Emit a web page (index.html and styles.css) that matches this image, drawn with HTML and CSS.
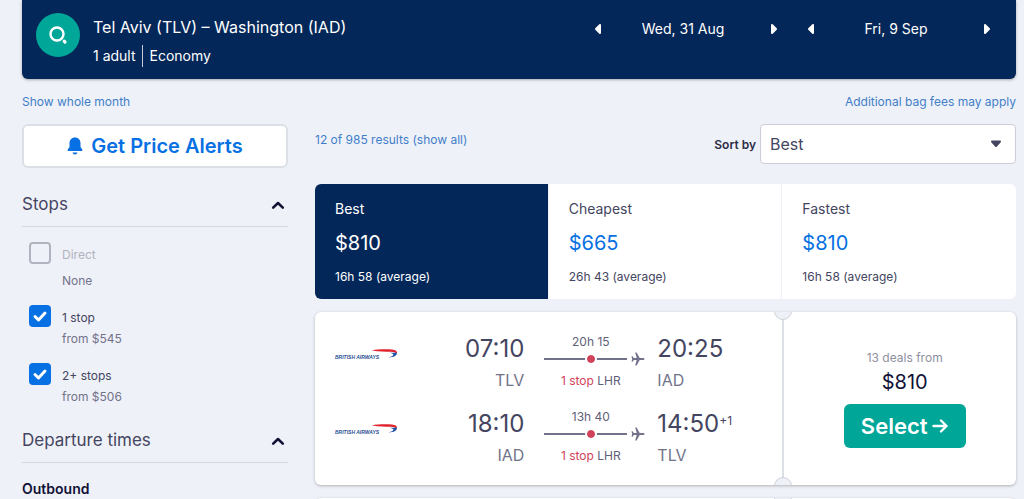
FILE: index.html
```html
<!DOCTYPE html>
<html lang="en">
<head>
    <meta charset="UTF-8">
    <meta name="viewport" content="width=device-width, initial-scale=1.0">
    <title>Tel Aviv (TLV) – Washington (IAD)</title>
    <link rel="stylesheet" href="styles.css">
</head>
<body>

    <!-- Shared icons -->
    <svg class="sprite" width="0" height="0" aria-hidden="true">
        <symbol id="left" viewBox="0 0 8 12"><path d="M6 2v8L2 6z" fill="currentColor" stroke="currentColor" stroke-width="2" stroke-linejoin="round"/></symbol>
        <symbol id="right" viewBox="0 0 8 12"><path d="M2 2v8l4-4z" fill="currentColor" stroke="currentColor" stroke-width="2" stroke-linejoin="round"/></symbol>
        <symbol id="chevron" viewBox="0 0 14 10"><path d="M2.2 7.6L7 3l4.800 4.600" fill="none" stroke="currentColor" stroke-width="2.600" stroke-linecap="round" stroke-linejoin="round"/></symbol>
        <symbol id="plane" viewBox="0 0 14 14"><path d="M13.500 7c0-.7-.7-1-1.500-1H8.700L5.600.6H4.200L5.700 6H2.800L1.600 4.300H.5L1.200 7 .5 9.700h1.100L2.800 8h2.900l-1.500 5.400h1.400L8.700 8H12c.8 0 1.500-.3 1.500-1z" fill="currentColor"/></symbol>
        <symbol id="ribbon" viewBox="0 0 62 14">
            <path d="M37 2.400c5-1.300 14-1.300 20-.9 3.500.3 5 1.600 5 3.100l-1 1.200c-.5-1.400-2-1.900-5-2.100-6-.4-12 .3-19-1.300z" fill="#e0232e"/>
            <path d="M61.800 4.600c.4 2.800-2.300 4.500-8.300 4.800 3.500-.7 5.200-1.900 4.600-3.100-.4-.7-2-1.200-4-1.500 3-.1 5.700.1 7.700-.2z" fill="#2455a4"/>
        </symbol>
    </svg>

    <header class="search-bar">
        <button class="search-button" aria-label="Edit search">
            <svg width="20" height="20" viewBox="0 0 20 20" fill="none" stroke="#fff" stroke-linecap="round"><circle cx="9" cy="9" r="6.500" stroke-width="2.400"/><path d="M16.200 16.200l.8.8" stroke-width="3.200"/></svg>
        </button>
        <div class="search-summary">
            <h1>Tel Aviv (TLV) – Washington (IAD)</h1>
            <p><span>1 adult</span><span class="cabin">Economy</span></p>
        </div>
        <div class="dates">
            <div class="date">
                <button aria-label="Earlier departure"><svg width="8" height="12"><use href="#left"/></svg></button>
                <span>Wed, 31 Aug</span>
                <button aria-label="Later departure"><svg width="8" height="12"><use href="#right"/></svg></button>
            </div>
            <div class="date">
                <button aria-label="Earlier return"><svg width="8" height="12"><use href="#left"/></svg></button>
                <span>Fri, 9 Sep</span>
                <button aria-label="Later return"><svg width="8" height="12"><use href="#right"/></svg></button>
            </div>
        </div>
    </header>

    <nav class="links">
        <a href="#">Show whole month</a>
        <a href="#">Additional bag fees may apply</a>
    </nav>

    <div class="page">
        <aside class="filters">
            <button class="alerts">
                <svg width="16" height="18" viewBox="0 0 16 18" fill="#0770e3"><path d="M8 .5C4.600.500 2.500 3 2.500 6v4L.7 12.600c-.4.700 0 1.400.7 1.400h13.200c.7 0 1.100-.7.7-1.400L13.500 10V6c0-3-2.100-5.500-5.500-5.500z"/><path d="M5.500 15.500h5c-.3 1.300-1.300 2-2.500 2s-2.200-.7-2.500-2z"/></svg>
                Get Price Alerts
            </button>

            <h2><button class="section-toggle">Stops <svg width="14" height="10"><use href="#chevron"/></svg></button></h2>
            <ul class="options">
                <li class="option unavailable">
                    <input type="checkbox" id="direct" disabled>
                    <label for="direct">Direct</label>
                    <span class="note">None</span>
                </li>
                <li class="option">
                    <input type="checkbox" id="one-stop" checked>
                    <label for="one-stop">1 stop</label>
                    <span class="note">from $545</span>
                </li>
                <li class="option">
                    <input type="checkbox" id="two-stops" checked>
                    <label for="two-stops">2+ stops</label>
                    <span class="note">from $506</span>
                </li>
            </ul>

            <h2><button class="section-toggle">Departure times <svg width="14" height="10"><use href="#chevron"/></svg></button></h2>
            <h3>Outbound</h3>
        </aside>

        <main class="results">
            <div class="toolbar">
                <a href="#">12 of 985 results (show all)</a>
                <div class="sort">
                    <label for="sort">Sort by</label>
                    <div class="select">
                        <select id="sort">
                            <option>Best</option>
                            <option>Cheapest</option>
                            <option>Fastest</option>
                        </select>
                        <svg width="12" height="8" viewBox="0 0 12 8"><path d="M2 1.500h8L6 6z" fill="#444560" stroke="#444560" stroke-width="2" stroke-linejoin="round"/></svg>
                    </div>
                </div>
            </div>

            <div class="tabs">
                <button class="tab active"><span>Best</span><strong>$810</strong><small>16h 58 (average)</small></button>
                <button class="tab"><span>Cheapest</span><strong>$665</strong><small>26h 43 (average)</small></button>
                <button class="tab"><span>Fastest</span><strong>$810</strong><small>16h 58 (average)</small></button>
            </div>

            <article class="ticket">
                <div class="legs">
                    <div class="leg">
                        <svg class="airline" width="62" height="14" viewBox="0 0 62 14"><text x="0" y="11">BRITISH AIRWAYS</text><use href="#ribbon"/></svg>
                        <div class="depart"><time>07:10</time><span>TLV</span></div>
                        <div class="route">
                            <span class="duration">20h 15</span>
                            <div class="track"><i></i><svg width="14" height="14"><use href="#plane"/></svg></div>
                            <span class="stops"><em>1 stop</em> LHR</span>
                        </div>
                        <div class="arrive"><time>20:25</time><span>IAD</span></div>
                    </div>
                    <div class="leg">
                        <svg class="airline" width="62" height="14" viewBox="0 0 62 14"><text x="0" y="11">BRITISH AIRWAYS</text><use href="#ribbon"/></svg>
                        <div class="depart"><time>18:10</time><span>IAD</span></div>
                        <div class="route">
                            <span class="duration">13h 40</span>
                            <div class="track"><i></i><svg width="14" height="14"><use href="#plane"/></svg></div>
                            <span class="stops"><em>1 stop</em> LHR</span>
                        </div>
                        <div class="arrive"><time>14:50<sup>+1</sup></time><span>TLV</span></div>
                    </div>
                </div>
                <div class="price">
                    <span class="deals">13 deals from</span>
                    <strong>$810</strong>
                    <button class="select-button">Select
                        <svg width="16" height="16" viewBox="0 0 16 16" fill="none" stroke="#fff" stroke-width="2.400" stroke-linecap="round" stroke-linejoin="round"><path d="M1.500 8h13M9 2.500L14.500 8 9 13.500"/></svg>
                    </button>
                </div>
            </article>

            <article class="ticket">
                <div class="legs"></div>
                <div class="price"></div>
            </article>
        </main>
    </div>

</body>
</html>
```
FILE: styles.css
```css
:root {
    --navy: #042759;
    --blue: #0770e3;
    --link: #3f7fc9;
    --green: #00a698;
    --red: #d1435b;
    --text: #444560;
    --muted: #72738a;
    --line: #dddfe6;
    --page: #eff1f8;
}

*,
*::before,
*::after {
    margin: 0;
    padding: 0;
    box-sizing: border-box;
}

html {
    scrollbar-width: none;
}

body {
    padding: 0 8px 0 22px;
    background: var(--page);
    color: var(--text);
    font-family: Inter, "Liberation Sans", sans-serif;
    font-size: 12px;
}

button, select {
    font: inherit;
    color: inherit;
    background: none;
    border: none;
    cursor: pointer;
}

svg {
    display: block;
}

a {
    color: var(--link);
    text-decoration: none;
}

.sprite {
    position: absolute;
}

/* Search bar */
.search-bar {
    display: flex;
    align-items: flex-start;
    gap: 13px;
    padding: 13px 21px 11px 14px;
    background: var(--navy);
    color: #fff;
    border-radius: 0 0 6px 6px;
    box-shadow: 0 1px 3px rgba(0, 0, 0, 0.3);
}

.search-button {
    display: flex;
    align-items: center;
    justify-content: center;
    width: 44px;
    height: 44px;
    background: var(--green);
    border-radius: 50%;
}

.search-summary {
    flex: 1;
}

.search-summary h1 {
    font-size: 16px;
    font-weight: 400;
    line-height: 28px;
}

.search-summary p {
    display: flex;
    align-items: center;
    font-size: 14px;
    line-height: 22px;
    padding: 4px 0 1px;
}

.cabin {
    margin-left: 6px;
    padding-left: 7px;
    border-left: 1px solid #c5cad8;
}

.dates {
    display: flex;
    gap: 21px;
    font-size: 14px;
    line-height: 32px;
}

.date {
    display: flex;
    align-items: center;
    justify-content: space-between;
    width: 192px;
}

.date span {
    padding-right: 6px;
}

.date button {
    padding: 4px;
}

.links {
    display: flex;
    justify-content: space-between;
    padding: 13px 0 12px;
    line-height: 20px;
}

/* Columns */
.page {
    display: grid;
    grid-template-columns: 266px 1fr;
    gap: 27px;
}

/* Filters */
.alerts {
    display: flex;
    align-items: center;
    justify-content: center;
    gap: 8px;
    width: 100%;
    height: 44px;
    margin-bottom: 14px;
    background: #fff;
    border: 2px solid var(--line);
    border-radius: 6px;
    color: var(--blue);
    font-size: 20px;
    font-weight: 600;
}

.section-toggle {
    display: flex;
    align-items: center;
    justify-content: space-between;
    width: 100%;
    padding: 1px 3px 0 0;
    border-bottom: 1px solid #d5d7df;
    font-size: 17px;
    font-weight: 400;
    line-height: 43px;
}

.section-toggle svg {
    color: #111236;
}

.options {
    display: grid;
    gap: 14px;
    padding: 15px 0 11px 7px;
    list-style: none;
}

.option {
    display: grid;
    grid-template-columns: 22px 1fr;
    column-gap: 11px;
    padding-top: 2px;
    line-height: 21px;
}

.option input {
    appearance: none;
    width: 22px;
    height: 22px;
    margin: -2px 0 -1px;
    border: 2px solid #b2b3bf;
    border-radius: 4px;
}

.option input:checked {
    border-color: var(--blue);
    background: var(--blue) url("data:image/svg+xml,%3Csvg xmlns='http://www.w3.org/2000/svg' viewBox='0 0 18 18'%3E%3Cpath d='M4 9.500l3.500 3.500L14 6' fill='none' stroke='white' stroke-width='3' stroke-linecap='round' stroke-linejoin='round'/%3E%3C/svg%3E") center / 18px no-repeat;
}

.note {
    grid-column: 2;
    color: var(--muted);
}

.unavailable {
    row-gap: 5px;
}

.unavailable label {
    color: #b2b3bf;
}

.filters h3 {
    color: #111236;
    font-size: 14px;
    font-weight: 600;
    line-height: 20px;
    padding: 16px 0;
}

/* Results */
.toolbar {
    display: flex;
    justify-content: space-between;
    margin-bottom: 20px;
}

.toolbar a {
    line-height: 32px;
}

.sort {
    display: flex;
    align-items: center;
    gap: 4px;
}

.sort label {
    color: #2b2c48;
    font-weight: 600;
}

.select {
    position: relative;
}

.select select {
    appearance: none;
    width: 256px;
    height: 40px;
    padding: 0 9px;
    background: #fff;
    border: 1px solid #cdcdd7;
    border-radius: 4px;
    font-size: 16px;
}

.select svg {
    position: absolute;
    top: 16px;
    right: 14px;
    pointer-events: none;
}

.tabs {
    display: grid;
    grid-template-columns: repeat(3, 1fr);
    margin-bottom: 13px;
    background: #fff;
    border-radius: 6px;
    overflow: hidden;
}

.tab {
    display: flex;
    flex-direction: column;
    padding: 14px 20px 12px;
    border-right: 1px solid var(--page);
    text-align: left;
}

.tab:last-child {
    border-right: none;
}

.tab span {
    font-size: 14px;
    line-height: 22px;
}

.tab strong {
    color: var(--blue);
    font-size: 20px;
    font-weight: 400;
    line-height: 46px;
}

.tab small {
    font-size: 12px;
    line-height: 21px;
}

.tab.active {
    background: var(--navy);
}

.tab.active * {
    color: #fff;
}

/* Ticket */
.ticket {
    position: relative;
    display: grid;
    grid-template-columns: 2fr 1fr;
    min-height: 173px;
    margin-bottom: 13px;
    background: #fff;
    border-radius: 6px;
    box-shadow: 0 1px 3px rgba(37, 32, 31, 0.3);
    overflow: hidden;
}

/* Punched notches at both ends of the divider */
.ticket::before,
.ticket::after {
    content: "";
    position: absolute;
    left: calc(200% / 3 - 8px);
    width: 18px;
    height: 18px;
    background: var(--page);
    border: 1px solid #cfd1d8;
    border-radius: 50%;
}

.ticket::before {
    top: -10px;
}

.ticket::after {
    bottom: -10px;
}

.legs {
    display: grid;
    align-content: center;
    gap: 11px;
    padding: 6px 0 0 20px;
}

.leg {
    display: grid;
    grid-template-columns: 62px 1fr 101px 137px;
    align-items: center;
}

.airline {
    margin-bottom: 18px;
}

.airline text {
    fill: #2b4f94;
    font-family: "Liberation Sans", sans-serif;
    font-size: 5px;
    font-weight: 700;
    font-style: italic;
}

.leg time {
    display: block;
    font-size: 24px;
    line-height: 32px;
}

.leg sup {
    font-size: 12px;
    line-height: 12px;
    vertical-align: 7px;
}

.depart span,
.arrive span {
    color: var(--muted);
    font-size: 16px;
    line-height: 30px;
}

.depart {
    padding-right: 20px;
    text-align: right;
}

.arrive {
    padding-left: 12px;
}

.route {
    display: flex;
    flex-direction: column;
    text-align: center;
    color: #5f6078;
}

.duration,
.stops {
    padding-right: 8px;
}

.duration {
    line-height: 20px;
}

.stops {
    line-height: 30px;
}

.stops em {
    color: var(--red);
    font-style: normal;
}

.track {
    display: flex;
    align-items: center;
    gap: 4px;
    color: var(--muted);
}

.track i {
    position: relative;
    flex: 1;
    height: 2px;
    background: var(--muted);
}

.track i::after {
    content: "";
    position: absolute;
    top: -5px;
    right: 30px;
    width: 12px;
    height: 12px;
    background: var(--red);
    background-clip: padding-box;
    border: 2px solid #fff;
    border-radius: 50%;
}

.price {
    display: flex;
    flex-direction: column;
    align-items: center;
    justify-content: center;
    padding: 0 0 2px 9px;
    border-left: 2px solid var(--line);
}

.deals {
    color: #8f90a0;
    line-height: 20px;
}

.price strong {
    color: #111236;
    font-size: 20px;
    font-weight: 400;
    line-height: 28px;
    margin-bottom: 8px;
}

.select-button {
    display: flex;
    align-items: center;
    gap: 4px;
    height: 44px;
    padding: 0 18px 0 17px;
    background: var(--green);
    border-radius: 6px;
    color: #fff;
    font-size: 22px;
    font-weight: 600;
}
```
